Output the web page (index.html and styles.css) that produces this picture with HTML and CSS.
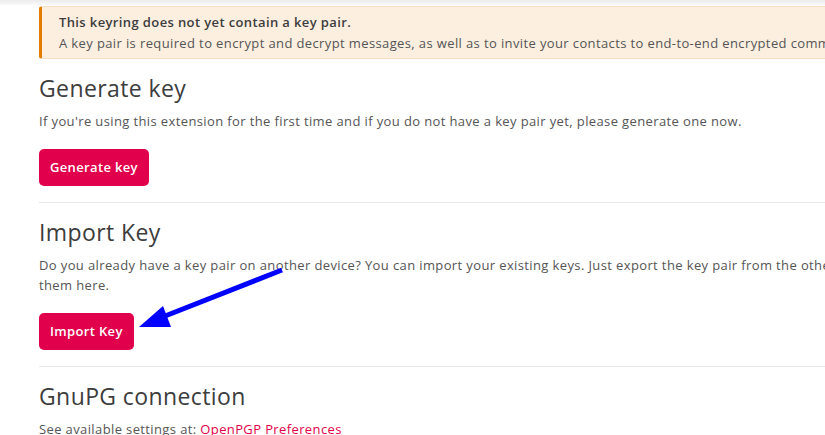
FILE: index.html
```html
<!DOCTYPE html>
<html lang="en">
<head>
<meta charset="utf-8">
<title>Keyring setup</title>
<link rel="stylesheet" href="styles.css">
</head>
<body>
<div class="topshade"></div>
<main class="page">
  <div class="alert">
    <div class="alert-title">This keyring does not yet contain a key pair.</div>
    <div class="alert-text">A key pair is required to encrypt and decrypt messages, as well as to invite your contacts to end-to-end encrypted communication.</div>
  </div>

  <section class="section">
    <h2 class="title">Generate key</h2>
    <p class="text">If you're using this extension for the first time and if you do not have a key pair yet, please generate one now.</p>
    <button class="btn">Generate key</button>
  </section>

  <section class="section">
    <h2 class="title">Import Key</h2>
    <p class="text">Do you already have a key pair on another device? You can import your existing keys. Just export the key pair from the other device and import them here.</p>
    <button class="btn">Import Key</button>
  </section>

  <section class="section last">
    <h2 class="title">GnuPG connection</h2>
    <p class="text">See available settings at: <a class="link" href="#">OpenPGP Preferences</a></p>
  </section>
</main>
<svg class="arrow" width="825" height="435" viewBox="0 0 825 435">
  <line x1="282" y1="270" x2="160" y2="318" stroke="#0000ff" stroke-width="5"/>
  <polygon points="139,327 163,306 171,327" fill="#0000ff"/>
</svg>
</body>
</html>
```
FILE: styles.css
```css
html, body {
  margin: 0;
  padding: 0;
  background: #ffffff;
  overflow: hidden;
  width: 825px;
  height: 435px;
}
body {
  position: relative;
  font-family: "Open Sans", "Liberation Sans", sans-serif;
  font-size: 13px;
  letter-spacing: 0.38px;
  color: #555555;
}
.topshade {
  height: 5px;
  background: linear-gradient(#ececec, #f9f9f9);
}
.page {
  margin-left: 39px;
  width: 928px;
}
.alert {
  margin-top: 1px;
  background: #fcefe0;
  border: 1px solid #f9dfc3;
  border-left: 3px solid #e47c00;
  border-radius: 3px;
  padding: 5px 16px 4px 17px;
  line-height: 21px;
}
.alert-title {
  font-weight: 600;
  color: #3d3d3d;
}
.alert-text {
  color: #555555;
}
.section {
  padding: 15px 0 16px;
  border-bottom: 1px solid #e9e9e9;
}
.section.last {
  border-bottom: none;
}
.title {
  margin: 0;
  font-size: 23px;
  line-height: 28px;
  font-weight: 400;
  letter-spacing: 0.4px;
  color: #3d3d3d;
}
.text {
  margin: 9px 0 0;
  line-height: 20.5px;
}
.btn {
  margin-top: 17px;
  display: block;
  height: 37px;
  padding: 0 11px;
  border: none;
  border-radius: 5px;
  background: #e0004b;
  color: #ffffff;
  font-family: inherit;
  font-size: 13px;
  font-weight: 600;
  letter-spacing: 0.35px;
}
.link {
  color: #e2004a;
  text-decoration: none;
}
.arrow {
  position: absolute;
  left: 0;
  top: 0;
  pointer-events: none;
}
```
